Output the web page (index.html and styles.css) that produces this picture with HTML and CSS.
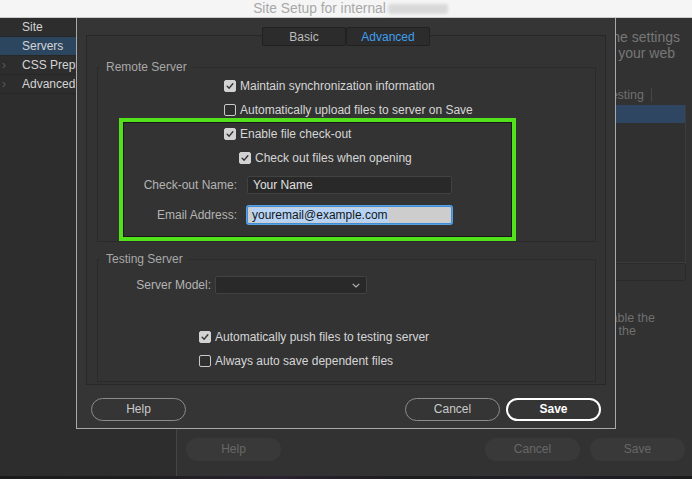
FILE: index.html
```html
<!DOCTYPE html>
<html>
<head>
<meta charset="utf-8">
<title>Site Setup</title>
<link rel="stylesheet" href="styles.css">
</head>
<body>
<div class="screen">
  <header class="titlebar">
    <span class="title">Site Setup for internal</span><span class="blur"></span>
  </header>

  <div class="app">
    <nav class="sidebar">
      <div class="nav-item">Site</div>
      <div class="nav-item selected">Servers</div>
      <div class="nav-item"><span class="chev">›</span>CSS Prepro</div>
      <div class="nav-item"><span class="chev">›</span>Advanced</div>
    </nav>

    <main class="main">
      <div class="intro frag">
        <p class="intro-l1">he settings</p>
        <p class="intro-l2">your web</p>
      </div>
      <div class="thead">
        <span class="th-last">esting</span><span class="th-blank"></span>
      </div>
      <div class="list">
        <div class="list-row selected"></div>
      </div>
      <div class="toolbar"></div>
      <div class="note frag">
        <p class="note-l1">able the</p>
        <p class="note-l2">the</p>
      </div>
      <div class="app-buttons">
        <span class="app-btn">Help</span>
        <span class="spacer"></span>
        <span class="app-btn">Cancel</span>
        <span class="app-btn">Save</span>
      </div>
    </main>
  </div>
  <div class="strip"></div>

  <section class="dialog">
    <div class="tabs">
      <span class="tab">Basic</span>
      <span class="tab active">Advanced</span>
    </div>
    <div class="panel">
      <fieldset class="group">
        <legend>Remote Server</legend>
        <div class="cb-row">
          <span class="cb checked"><svg viewBox="0 0 12 12"><path d="M2.6 6.3 L5 8.6 L9.4 3.3"/></svg></span>
          <span>Maintain synchronization information</span>
        </div>
        <div class="cb-row">
          <span class="cb"></span>
          <span>Automatically upload files to server on Save</span>
        </div>
        <div class="cb-row">
          <span class="cb checked"><svg viewBox="0 0 12 12"><path d="M2.6 6.3 L5 8.6 L9.4 3.3"/></svg></span>
          <span>Enable file check-out</span>
        </div>
        <div class="cb-row indent">
          <span class="cb checked"><svg viewBox="0 0 12 12"><path d="M2.6 6.3 L5 8.6 L9.4 3.3"/></svg></span>
          <span>Check out files when opening</span>
        </div>
        <div class="field-row">
          <label class="field-label">Check-out Name:</label>
          <span class="input">Your Name</span>
        </div>
        <div class="field-row">
          <label class="field-label">Email Address:</label>
          <span class="input focused"><span class="sel-text">youremail@example.com</span></span>
        </div>
      </fieldset>

      <fieldset class="group testing">
        <legend>Testing Server</legend>
        <div class="field-row model-row">
          <label class="field-label model-label">Server Model:</label>
          <span class="select"><svg class="chevron" viewBox="0 0 8 5"><path d="M0.7 0.8 L4 4 L7.3 0.8"/></svg></span>
        </div>
        <div class="cb-row test-cb first">
          <span class="cb checked"><svg viewBox="0 0 12 12"><path d="M2.6 6.3 L5 8.6 L9.4 3.3"/></svg></span>
          <span>Automatically push files to testing server</span>
        </div>
        <div class="cb-row test-cb">
          <span class="cb"></span>
          <span>Always auto save dependent files</span>
        </div>
      </fieldset>
    </div>
    <div class="dialog-buttons">
      <span class="btn">Help</span>
      <span class="spacer"></span>
      <span class="btn">Cancel</span>
      <span class="btn primary">Save</span>
    </div>
  </section>

  <div class="highlight"></div>
</div>
</body>
</html>
```

FILE: styles.css
```css
* { box-sizing: border-box; }

html, body {
  margin: 0;
  padding: 0;
  background: #2d2d2d;
}

body {
  font-family: "Liberation Sans", Arial, sans-serif;
  font-size: 12px;
  color: #d6d6d6;
}

.screen {
  position: relative;
  width: 692px;
  height: 479px;
  overflow: hidden;
  display: flex;
  flex-direction: column;
}

/* ---------- title bar ---------- */
.titlebar {
  height: 18px;
  flex: none;
  background: #f5f5f5;
  border-bottom: 1px solid #cbcbcb;
  display: flex;
  justify-content: center;
  align-items: center;
  padding-left: 9px;
}

.title {
  font-size: 13.8px;
  line-height: 15px;
  color: #a8a8a8;
}

.blur {
  width: 60px;
  height: 10px;
  margin-left: 2px;
  background: #d9d9d9;
  border-radius: 3px;
  filter: blur(1.5px);
}

/* ---------- background app ---------- */
.app {
  flex: 1;
  display: flex;
  min-height: 0;
}

.sidebar {
  width: 177px;
  flex: none;
  background: #2d2d2d;
  border-right: 1px solid #454545;
}

.nav-item {
  position: relative;
  height: 19px;
  line-height: 18px;
  padding-left: 22px;
  color: #d4d4d4;
  border-bottom: 1px solid #272727;
  white-space: nowrap;
}

.nav-item.selected {
  background: #2d4660;
}

.chev {
  position: absolute;
  left: 2px;
  top: 0;
  color: #5a5a5a;
  font-size: 12px;
}

.main {
  flex: 1;
  min-width: 0;
  background: #323232;
  display: flex;
  flex-direction: column;
  padding: 11px 6px 15px 9px;
  color: #777;
}

/* visible ends of text blocks whose left part is under the dialog */
.frag {
  align-self: flex-end;
  white-space: nowrap;
}

.frag p {
  margin: 0;
  text-align: right;
}

.intro {
  font-size: 14px;
  line-height: 16px;
}

.intro-l1 { padding-right: 6px; }
.intro-l2 { padding-right: 11px; }

.thead {
  margin-top: 27px;
  height: 14px;
  line-height: 14px;
  display: flex;
  justify-content: flex-end;
  font-size: 12.5px;
  color: #6f6f6f;
}

.th-last {
  padding-right: 7px;
  border-right: 1px solid #474747;
}

.th-blank {
  width: 34px;
}

.list {
  margin-top: 3px;
  height: 158px;
  border: 1px solid #3c3c3c;
  border-top: none;
  background: #303030;
}

.list-row {
  height: 18px;
}

.list-row.selected {
  background: #2e4661;
}

.toolbar {
  height: 18px;
  border: 1px solid #2a2a2a;
  border-radius: 3px;
}

.note {
  margin-top: 31px;
  font-size: 12.5px;
  line-height: 13px;
  color: #6f6f6f;
}

.note-l1 { padding-right: 31px; }
.note-l2 { padding-right: 50px; }

.app-buttons {
  margin-top: auto;
  display: flex;
  gap: 10px;
  padding-right: 1px;
}

.app-btn {
  width: 95px;
  height: 23px;
  line-height: 23px;
  text-align: center;
  border-radius: 12px;
  background: #393939;
  color: #676767;
}

.spacer { flex: 1; }

.strip {
  height: 3px;
  flex: none;
  background: linear-gradient(90deg, #1b1b1b, #1f1f1f 20%, #2a2230 40%, #1d1d1d 60%, #23202a 80%, #1b1b1b);
}

/* ---------- dialog ---------- */
.dialog {
  position: absolute;
  left: 76px;
  top: 18px;
  width: 540px;
  height: 411px;
  background: #353535;
  border: 1px solid #a9a9a9;
  border-top: none;
  display: flex;
  flex-direction: column;
  padding: 9px 9px 0;
}

.tabs {
  align-self: center;
  display: flex;
  position: relative;
  z-index: 1;
}

.tab {
  width: 84px;
  height: 19px;
  line-height: 18px;
  text-align: center;
  background: #2c2c2c;
  border: 1px solid #212121;
  border-radius: 2px;
  color: #bdbdbd;
}

.tab.active {
  color: #3e9ff0;
}

.panel {
  margin-top: -11px;
  background: #333333;
  border: 1px solid #282828;
  padding: 0 9px 2px 10px;
}

.group {
  margin: 24px 0 0;
  padding: 0 0 11px;
  border: 1px solid #2a2a2a;
  min-width: 0;
}

.group.testing {
  margin-top: 10px;
  padding-bottom: 8px;
}

.group legend {
  margin-left: 2px;
  padding: 0 6px;
  line-height: 14px;
  color: #a8a8a8;
}

.cb-row {
  height: 24px;
  display: flex;
  align-items: center;
  padding-left: 126px;
  gap: 4px;
  white-space: nowrap;
}

.cb-row.indent { padding-left: 141px; }

.cb {
  width: 12px;
  height: 12px;
  flex: none;
  border: 1px solid #c9c9c9;
  border-radius: 2px;
  background: #2f2f2f;
}

.cb.checked {
  background: #d2d2d2;
  border-color: #d2d2d2;
}

.cb svg {
  display: block;
  width: 10px;
  height: 10px;
  fill: none;
  stroke: #333;
  stroke-width: 1.7;
  stroke-linecap: round;
  stroke-linejoin: round;
}

.field-row {
  height: 30px;
  display: flex;
  align-items: center;
  gap: 10px;
}

.field-label {
  width: 139px;
  text-align: right;
  color: #b4b4b4;
}

.input {
  width: 205px;
  height: 18px;
  line-height: 16px;
  padding-left: 5px;
  background: #292929;
  border: 1px solid #424242;
  border-radius: 2px;
  color: #e0e0e0;
}

.input.focused {
  background: #cdcdcd;
  border-color: #3c8edb;
  box-shadow: 0 0 0 1px #5a9fe0;
  color: #161616;
  padding-left: 4px;
}

.sel-text {
  background: #b7d4f6;
}

.model-row {
  height: 26px;
  margin-top: 6px;
  gap: 4px;
}

.model-label { width: 113px; }

.select {
  position: relative;
  width: 152px;
  height: 18px;
  background: #292929;
  border: 1px solid #424242;
  border-radius: 2px;
  display: flex;
  align-items: center;
  justify-content: flex-end;
  padding-right: 6px;
}

.chevron {
  width: 8px;
  height: 5px;
  fill: none;
  stroke: #b8b8b8;
  stroke-width: 1.1;
}

.test-cb { padding-left: 101px; }
.test-cb.first { margin-top: 27px; }

.dialog-buttons {
  margin-top: 13px;
  display: flex;
  gap: 6px;
  padding: 0 5px;
}

.btn {
  width: 95px;
  height: 23px;
  line-height: 21px;
  text-align: center;
  border: 1px solid #8c8c8c;
  border-radius: 12px;
  color: #cacaca;
}

.btn.primary {
  border: 2px solid #ffffff;
  line-height: 19px;
  color: #ffffff;
  font-weight: bold;
}

/* ---------- annotation overlay ---------- */
.highlight {
  position: absolute;
  left: 119px;
  top: 118px;
  width: 397px;
  height: 123px;
  border: 4px solid #52e11a;
  box-shadow: inset 0 0 0 1px rgba(0, 0, 0, 0.55);
  pointer-events: none;
}
```
